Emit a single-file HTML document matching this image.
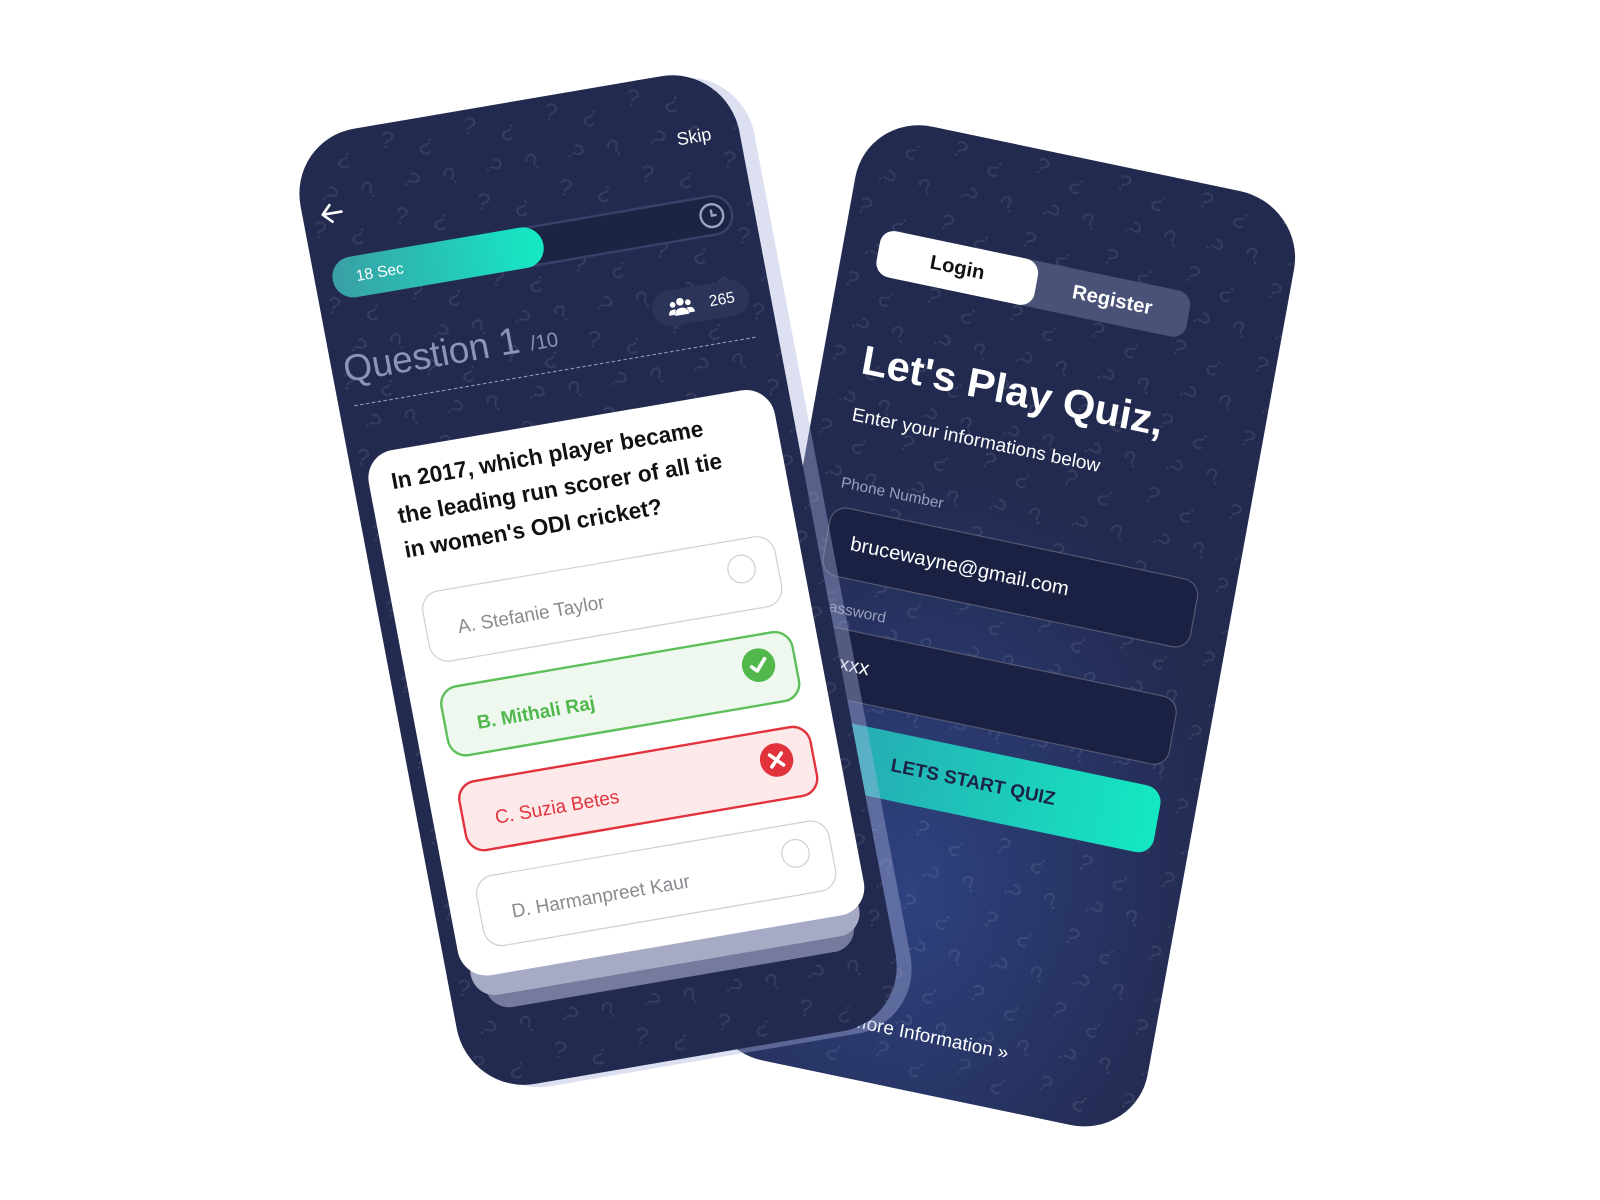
<!DOCTYPE html>
<html><head><meta charset="utf-8">
<style>
html,body{margin:0;padding:0;background:#fff;width:1600px;height:1200px;overflow:hidden;font-family:"Liberation Sans",sans-serif}
.phone{position:absolute;left:0;top:0;width:375px;height:812px;border-radius:56px;background:#232a4f;transform-origin:0 0;overflow:visible}
.clip{position:absolute;inset:0;border-radius:56px;overflow:hidden}
.pat{position:absolute;inset:0}
#L{height:806px;transform:matrix(1.17,-0.2,0.225,1.185,288,140);box-shadow:12px 4px 0 rgba(170,178,220,0.4);z-index:2}
#R{transform:matrix(1.17,0.245,-0.209,1.15,867,113);z-index:1}
.abs{position:absolute}
.opt{position:absolute;left:37px;width:302px;height:60px;border-radius:16px;box-sizing:border-box;border:1.5px solid #cfcfd4;background:#fff;font-size:16px;color:#8a8a90;padding:24px 0 0 26px}
.opt .ic{position:absolute;right:18px;top:12px;width:24px;height:24px;border-radius:50%;border:1.5px solid #cfcfd4;box-sizing:border-box}
</style></head><body>

<!-- RIGHT PHONE -->
<div class="phone" id="R">
 <div class="clip">
  <div class="abs" style="inset:0;background:radial-gradient(ellipse 260px 360px at 150px 640px,#2e4280 0%,rgba(46,66,128,0) 100%)"></div>
  <svg class="pat" width="375" height="812"><defs><pattern id="q2" width="70" height="64" patternUnits="userSpaceOnUse"><g fill="rgba(255,255,255,0.09)" font-family="Liberation Sans" font-size="20"><text x="6" y="20" transform="rotate(20 10 15)">?</text><text x="40" y="30" transform="rotate(-150 45 24)">?</text><text x="20" y="56" transform="rotate(60 25 50)">?</text><text x="55" y="60" transform="rotate(-30 58 55)">?</text></g></pattern></defs><rect width="375" height="812" fill="url(#q2)"/></svg>
  <div class="abs" style="left:30px;top:94px;width:265px;height:40px;border-radius:12px;background:#4a5277"></div>
  <div class="abs" style="left:30px;top:94px;width:135px;height:40px;border-radius:12px;background:#fff;color:#111;font-weight:bold;font-size:17px;text-align:center;line-height:40px">Login</div>
  <div class="abs" style="left:165px;top:94px;width:130px;height:40px;color:#fff;font-weight:bold;font-size:17px;text-align:center;line-height:40px">Register</div>
  <div class="abs" style="left:33px;top:188px;color:#fff;font-weight:bold;font-size:35px;white-space:nowrap">Let's Play Quiz,</div>
  <div class="abs" style="left:33px;top:247px;color:#fff;font-size:16px;white-space:nowrap">Enter your informations below</div>
  <div class="abs" style="left:34px;top:306px;color:#9aa0bd;font-size:13px">Phone Number</div>
  <div class="abs" style="left:30px;top:334px;width:315px;height:60px;border-radius:14px;background:#1b2143;border:1px solid rgba(255,255,255,0.25);box-sizing:border-box;color:#fff;font-size:17px;padding:19px 0 0 20px">brucewayne@gmail.com</div>
  <div class="abs" style="left:34px;top:412px;color:#9aa0bd;font-size:13px">Password</div>
  <div class="abs" style="left:30px;top:436px;width:315px;height:60px;border-radius:14px;background:#1b2143;border:1px solid rgba(255,255,255,0.25);box-sizing:border-box;color:#fff;font-size:17px;padding:19px 0 0 20px">xxxx</div>
  <div class="abs" style="left:30px;top:514px;width:315px;height:58px;border-radius:14px;background:linear-gradient(90deg,#2a9fb0,#14e8c2);color:#1c2346;font-weight:bold;font-size:16px;text-align:center;line-height:58px">LETS START QUIZ</div>
  <div class="abs" style="left:40px;top:755px;width:300px;text-align:center;color:#fff;font-size:16px">More Information &raquo;</div>
 </div>
</div>

<!-- LEFT PHONE -->
<div class="phone" id="L">
 <div class="clip">
  <svg class="pat" width="375" height="812"><defs><pattern id="q1" width="70" height="64" patternUnits="userSpaceOnUse"><g fill="rgba(255,255,255,0.09)" font-family="Liberation Sans" font-size="20"><text x="6" y="20" transform="rotate(20 10 15)">?</text><text x="40" y="30" transform="rotate(-150 45 24)">?</text><text x="20" y="56" transform="rotate(60 25 50)">?</text><text x="55" y="60" transform="rotate(-30 58 55)">?</text></g></pattern></defs><rect width="375" height="812" fill="url(#q1)"/></svg>
  <div class="abs" style="left:322px;top:46px;color:#fff;font-size:15px">Skip</div>
  <svg class="abs" style="left:14px;top:56px" width="22" height="20" viewBox="0 0 22 20"><path d="M19 10H4M10 3L3 10l7 7" stroke="#fff" stroke-width="2.2" fill="none" stroke-linecap="round" stroke-linejoin="round"/></svg>
  <div class="abs" style="left:15px;top:104px;width:342px;height:34px;border-radius:17px;background:#1d2343;border:2px solid #3a4168;box-sizing:border-box"></div>
  <svg class="abs" style="left:327px;top:109px" width="24" height="24" viewBox="0 0 24 24"><circle cx="12" cy="12" r="9.5" stroke="#9ba2c4" stroke-width="2" fill="none"/><path d="M12 7v5h4" stroke="#9ba2c4" stroke-width="2" fill="none"/></svg>
  <div class="abs" style="left:15px;top:104px;width:180px;height:34px;border-radius:17px;background:linear-gradient(90deg,#3a9fa6,#14eac4);color:#fff;font-size:13px;line-height:34px;padding-left:20px;box-sizing:border-box">18 Sec</div>
  <div class="abs" style="left:275px;top:176px;width:82px;height:30px;border-radius:15px;background:#2c3459;color:#fff;font-size:13px;line-height:30px;text-align:right;padding-right:12px;box-sizing:border-box">265</div>
  <svg class="abs" style="left:288px;top:183px" width="22" height="16" viewBox="0 0 22 16"><g fill="#fff"><circle cx="11" cy="4" r="3.2"/><circle cx="4.5" cy="5.5" r="2.4"/><circle cx="17.5" cy="5.5" r="2.4"/><path d="M5 15c0-4 2.5-6 6-6s6 2 6 6z"/><path d="M0 14c0-3 1.5-4.5 4.5-4.5 1 0 1.5.2 2 .5-1 1-1.5 2.5-1.5 4z"/><path d="M22 14c0-3-1.5-4.5-4.5-4.5-1 0-1.5.2-2 .5 1 1 1.5 2.5 1.5 4z"/></g></svg>
  <div class="abs" style="left:10px;top:178px;color:#8d94b8;font-size:31px;white-space:nowrap">Question 1 <span style="font-size:17px">/10</span></div>
  <div class="abs" style="left:13px;top:226px;width:343px;border-top:1.5px dashed #8d94b8"></div>
  <div class="abs" style="left:30px;top:700px;width:315px;height:40px;border-radius:24px;background:#767b9d"></div>
  <div class="abs" style="left:20px;top:688px;width:332px;height:40px;border-radius:24px;background:#a6aac4"></div>
  <div class="abs" style="left:13px;top:268px;width:347px;height:443px;border-radius:24px;background:#fff"></div>
  <div class="abs" style="left:32px;top:280px;width:330px;color:#111;font-weight:bold;font-size:19px;line-height:29px;white-space:nowrap">In 2017, which player became<br>the leading run scorer of all tie<br>in women's ODI cricket?</div>
  <div class="opt" style="top:389px">A. Stefanie Taylor<div class="ic"></div></div>
  <div class="opt" style="top:469px;border:2px solid #5cbf5a;background:#eef8ee;color:#4fb84d;font-weight:bold">B. Mithali Raj<svg class="abs" style="right:16px;top:10px" width="28" height="28" viewBox="0 0 28 28"><circle cx="14" cy="14" r="14" fill="#52b84c"/><path d="M8 14.5l4 4 8-9" stroke="#fff" stroke-width="3" fill="none" stroke-linecap="round" stroke-linejoin="round"/></svg></div>
  <div class="opt" style="top:549px;border:2px solid #e2323c;background:#fde8ea;color:#e2323c">C. Suzia Betes<svg class="abs" style="right:16px;top:10px" width="28" height="28" viewBox="0 0 28 28"><circle cx="14" cy="14" r="14" fill="#e2323c"/><path d="M9 9l10 10M19 9L9 19" stroke="#fff" stroke-width="3" stroke-linecap="round"/></svg></div>
  <div class="opt" style="top:629px">D. Harmanpreet Kaur<div class="ic"></div></div>
 </div>
</div>
</body></html>
